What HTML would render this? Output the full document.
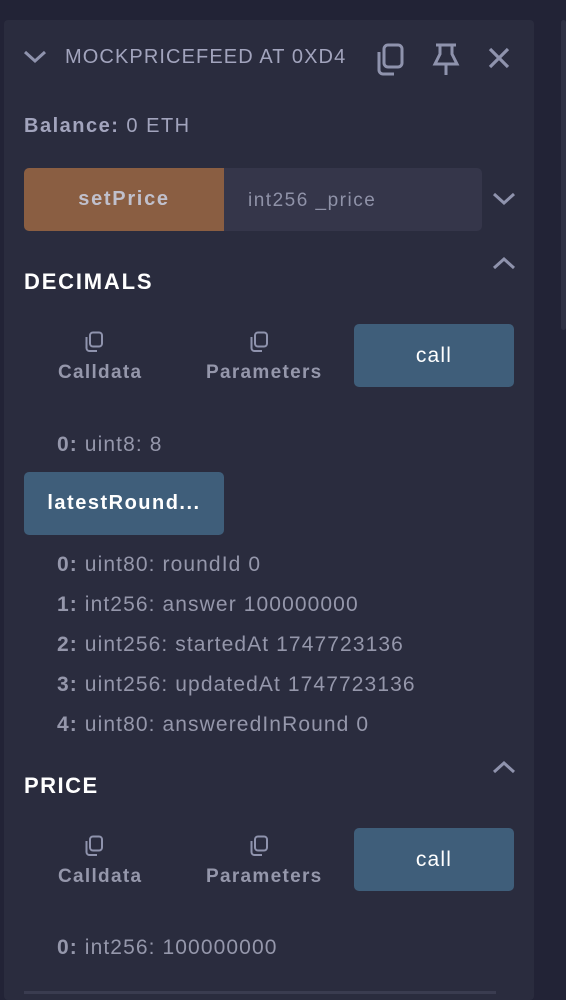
<!DOCTYPE html>
<html><head><meta charset="utf-8"><style>
*{margin:0;padding:0;box-sizing:border-box}
body{width:566px;height:994px;background:#222336;font-family:"Liberation Sans",sans-serif;position:relative;overflow:hidden;color:#a2a4bd}
.panel{position:absolute;left:4px;top:20px;width:530px;height:980px;background:#2a2c3e;border-radius:4px}
.sb{position:absolute;left:561px;top:20px;width:5px;height:310px;background:#2f3144;border-radius:3px}
.a{position:absolute;white-space:nowrap}
.btn{position:absolute;border-radius:5px;color:#fff;font-size:21px;letter-spacing:1.2px;display:flex;align-items:center;justify-content:center}
.h{font-weight:bold;color:#fff;font-size:22px;letter-spacing:1.8px}
.lbl{font-weight:bold;font-size:19px;letter-spacing:1.3px;color:#9597ab}
.res{font-size:21px;letter-spacing:1.1px;color:#9597ab}
.res b{font-weight:bold}
svg{position:absolute}
</style></head><body>
<div class="panel"></div>
<div class="sb"></div>
<svg style="left:22px;top:48px" width="26" height="18" viewBox="0 0 26 18"><path d="M3 4 L13 13 L23 4" stroke="#8f93ad" stroke-width="3" fill="none"/></svg>
<div class="a" style="left:65px;top:46px;font-size:20px;letter-spacing:1.1px;color:#a2a4bd">MOCKPRICEFEED AT 0XD4</div>
<svg style="left:374px;top:42px" width="32" height="36" viewBox="0 0 32 36"><rect x="10" y="3" width="18" height="22" rx="4" stroke="#8f93ad" stroke-width="3" fill="none"/><path d="M5 10 V28 a4 4 0 0 0 4 4 H20" stroke="#8f93ad" stroke-width="3" fill="none"/></svg>
<svg style="left:430px;top:42px" width="32" height="34" viewBox="0 0 32 34"><path d="M6 3 H26 M10 3 V12 L5 22 H27 L22 12 V3 M16 22 V33" stroke="#8f93ad" stroke-width="3" fill="none"/></svg>
<svg style="left:486px;top:46px" width="26" height="24" viewBox="0 0 26 24"><path d="M4 3 L22 21 M22 3 L4 21" stroke="#8f93ad" stroke-width="3.2" fill="none"/></svg>
<div class="a" style="left:24px;top:115px;font-size:20px;letter-spacing:1.5px;color:#a2a4bd"><b>Balance:</b> 0 ETH</div>
<div class="btn" style="left:24px;top:168px;width:200px;height:63px;background:#8a5e42;border-radius:5px 0 0 5px;color:#c0c0cc;font-weight:bold;font-size:20px;letter-spacing:1.7px">setPrice</div>
<div class="a" style="left:224px;top:168px;width:258px;height:63px;background:#35364a;border-radius:0 5px 5px 0"></div>
<div class="a" style="left:248px;top:190px;font-size:19px;letter-spacing:1.5px;color:#8f92a8">int256 _price</div>
<svg style="left:491px;top:190px" width="26" height="18" viewBox="0 0 26 18"><path d="M3 4 L13 13 L23 4" stroke="#8f93ad" stroke-width="3" fill="none"/></svg>
<div class="a h" style="left:24px;top:269px">DECIMALS</div>
<svg style="left:491px;top:254px" width="26" height="18" viewBox="0 0 26 18"><path d="M3 14 L13 5 L23 14" stroke="#8f93ad" stroke-width="3" fill="none"/></svg>
<svg style="left:84px;top:331px" width="20" height="22" viewBox="0 0 20 22"><rect x="6" y="1.5" width="12" height="14" rx="3" stroke="#8f93ad" stroke-width="2" fill="none"/><path d="M2.5 6 V17 a3 3 0 0 0 3 3 H13" stroke="#8f93ad" stroke-width="2" fill="none"/></svg>
<div class="a lbl" style="left:58px;top:362px">Calldata</div>
<svg style="left:249px;top:331px" width="20" height="22" viewBox="0 0 20 22"><rect x="6" y="1.5" width="12" height="14" rx="3" stroke="#8f93ad" stroke-width="2" fill="none"/><path d="M2.5 6 V17 a3 3 0 0 0 3 3 H13" stroke="#8f93ad" stroke-width="2" fill="none"/></svg>
<div class="a lbl" style="left:206px;top:362px">Parameters</div>
<div class="btn" style="left:354px;top:324px;width:160px;height:63px;background:#3f5e7a">call</div>
<div class="a res" style="left:57px;top:433px"><b>0:</b> uint8: 8</div>
<div class="btn" style="left:24px;top:472px;width:200px;height:63px;background:#3f5e7a;font-weight:bold;font-size:20px;letter-spacing:1.5px">latestRound...</div>
<div class="a res" style="left:57px;top:553px"><b>0:</b> uint80: roundId 0</div>
<div class="a res" style="left:57px;top:593px"><b>1:</b> int256: answer 100000000</div>
<div class="a res" style="left:57px;top:633px"><b>2:</b> uint256: startedAt 1747723136</div>
<div class="a res" style="left:57px;top:673px"><b>3:</b> uint256: updatedAt 1747723136</div>
<div class="a res" style="left:57px;top:713px"><b>4:</b> uint80: answeredInRound 0</div>
<div class="a h" style="left:24px;top:773px;letter-spacing:1.5px">PRICE</div>
<svg style="left:491px;top:758px" width="26" height="18" viewBox="0 0 26 18"><path d="M3 14 L13 5 L23 14" stroke="#8f93ad" stroke-width="3" fill="none"/></svg>
<svg style="left:84px;top:835px" width="20" height="22" viewBox="0 0 20 22"><rect x="6" y="1.5" width="12" height="14" rx="3" stroke="#8f93ad" stroke-width="2" fill="none"/><path d="M2.5 6 V17 a3 3 0 0 0 3 3 H13" stroke="#8f93ad" stroke-width="2" fill="none"/></svg>
<div class="a lbl" style="left:58px;top:866px">Calldata</div>
<svg style="left:249px;top:835px" width="20" height="22" viewBox="0 0 20 22"><rect x="6" y="1.5" width="12" height="14" rx="3" stroke="#8f93ad" stroke-width="2" fill="none"/><path d="M2.5 6 V17 a3 3 0 0 0 3 3 H13" stroke="#8f93ad" stroke-width="2" fill="none"/></svg>
<div class="a lbl" style="left:206px;top:866px">Parameters</div>
<div class="btn" style="left:354px;top:828px;width:160px;height:63px;background:#3f5e7a">call</div>
<div class="a res" style="left:57px;top:936px"><b>0:</b> int256: 100000000</div>
<div class="a" style="left:24px;top:991px;width:472px;height:3px;background:#3a3c50"></div>
</body></html>
